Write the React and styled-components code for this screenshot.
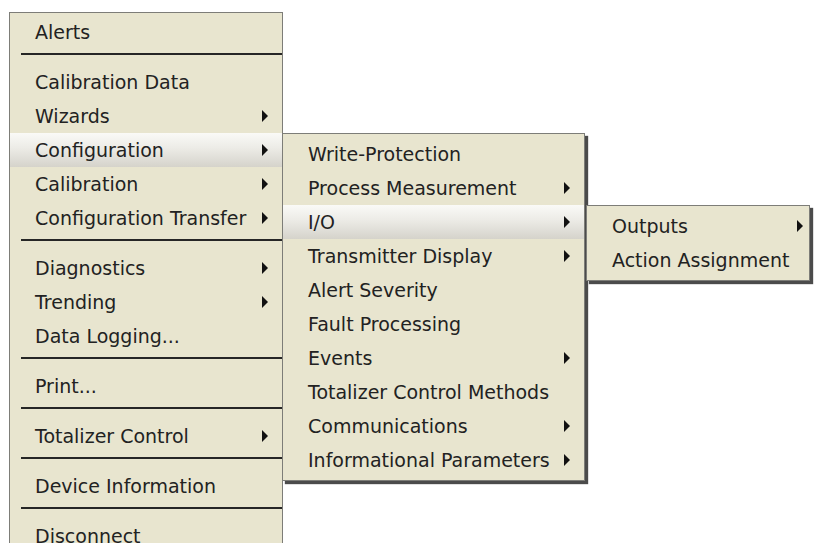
import React from "react";
import styled, { createGlobalStyle } from "styled-components";

const GlobalStyle = createGlobalStyle`
    html, body {
        margin: 0;
        padding: 0;
        background: #ffffff;
        overflow: hidden;
    }
    body {
        font-family: "DejaVu Sans", "Liberation Sans", sans-serif;
    }
`;

const Page = styled.div`
    width: 814px;
    height: 543px;
    padding: 12px 0 0 9px;
    box-sizing: border-box;
`;

const Menu = styled.div`
    width: ${(p) => p.$width}px;
    box-sizing: border-box;
    background: #e8e5cf;
    border: 1px solid #7d7d78;
    padding: ${(p) => (p.$pad ? "3px 0" : "2px 0 0")};
    display: flex;
    flex-direction: column;
    box-shadow: ${(p) => (p.$shadow ? "3px 3px 1px rgba(30, 30, 30, 0.8)" : "none")};
`;

const SubMenu = styled(Menu)`
    position: absolute;
    left: calc(100% + ${(p) => p.$offset}px);
    top: 0;
    z-index: 2;
`;

const Item = styled.div`
    position: relative;
    height: 34px;
    display: flex;
    align-items: center;
    padding-left: 25px;
    padding-right: ${(p) => p.$arrowRight}px;
    font-size: 19px;
    color: #222;
    white-space: nowrap;
    background: ${(p) =>
        p.$active ? "linear-gradient(#fafaf7 0%, #ecebe6 45%, #d5d3cb 100%)" : "transparent"};
`;

const Label = styled.span`
    flex: 1;
`;

const Arrow = styled.span`
    width: 0;
    height: 0;
    border-top: 6px solid transparent;
    border-bottom: 6px solid transparent;
    border-left: 6px solid #111;
    margin-left: 6px;
`;

const Separator = styled.div`
    height: 16px;
    display: flex;
    align-items: flex-start;
    padding-left: 11px;

    &::before {
        content: "";
        display: block;
        flex: 1;
        margin-top: 4px;
        height: 2px;
        background: #262626;
    }
`;

const MenuItem = ({ label, arrow, active, arrowRight = 14, children }) => (
    <Item $active={active} $arrowRight={arrowRight}>
        <Label>{label}</Label>
        {arrow && <Arrow />}
        {children}
    </Item>
);

const App = () => {
    return (
        <>
            <GlobalStyle />
            <Page>
                <Menu $width={274}>
                    <MenuItem label="Alerts" />
                    <Separator />
                    <MenuItem label="Calibration Data" />
                    <MenuItem label="Wizards" arrow />
                    <MenuItem label="Configuration" arrow active>
                        <SubMenu $width={303} $offset={0} $pad $shadow>
                            <MenuItem label="Write-Protection" />
                            <MenuItem label="Process Measurement" arrow />
                            <MenuItem label="I/O" arrow active>
                                <SubMenu $width={224} $offset={2} $pad $shadow>
                                    <MenuItem label="Outputs" arrow arrowRight={6} />
                                    <MenuItem label="Action Assignment" arrowRight={6} />
                                </SubMenu>
                            </MenuItem>
                            <MenuItem label="Transmitter Display" arrow />
                            <MenuItem label="Alert Severity" />
                            <MenuItem label="Fault Processing" />
                            <MenuItem label="Events" arrow />
                            <MenuItem label="Totalizer Control Methods" />
                            <MenuItem label="Communications" arrow />
                            <MenuItem label="Informational Parameters" arrow />
                        </SubMenu>
                    </MenuItem>
                    <MenuItem label="Calibration" arrow />
                    <MenuItem label="Configuration Transfer" arrow />
                    <Separator />
                    <MenuItem label="Diagnostics" arrow />
                    <MenuItem label="Trending" arrow />
                    <MenuItem label="Data Logging..." />
                    <Separator />
                    <MenuItem label="Print..." />
                    <Separator />
                    <MenuItem label="Totalizer Control" arrow />
                    <Separator />
                    <MenuItem label="Device Information" />
                    <Separator />
                    <MenuItem label="Disconnect" />
                </Menu>
            </Page>
        </>
    );
};

export default App;
